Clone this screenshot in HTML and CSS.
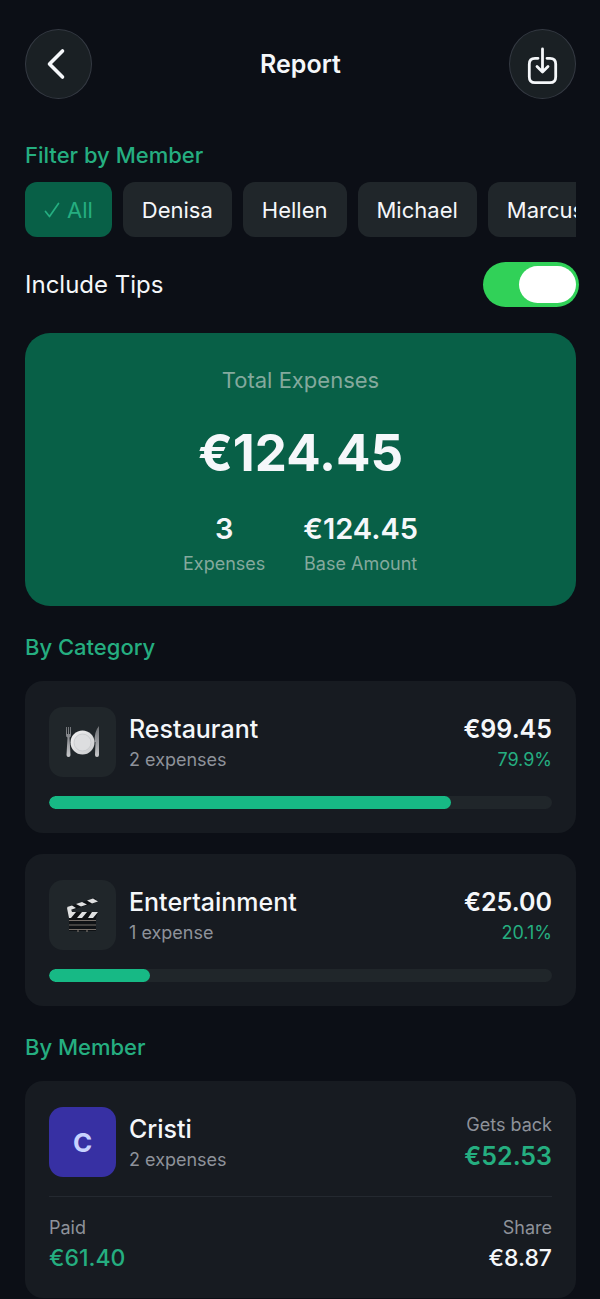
FILE: index.html
```html
<!DOCTYPE html>
<html lang="en">
<head>
<meta charset="utf-8">
<meta name="viewport" content="width=device-width, initial-scale=1">
<title>Report</title>
<link rel="stylesheet" href="styles.css">
</head>
<body>
<header class="topbar">
  <button class="round-button" type="button" aria-label="Back">
    <svg width="65" height="68" viewBox="0 0 65 68" fill="none" stroke="currentColor" stroke-width="3.6" stroke-linecap="round" stroke-linejoin="round"><path d="M36.500 21 23.500 34 36.500 47"/></svg>
  </button>
  <h1 class="title">Report</h1>
  <button class="round-button" type="button" aria-label="Export">
    <svg width="65" height="68" viewBox="0 0 65 68" fill="none" stroke="currentColor" stroke-width="2.8" stroke-linecap="round" stroke-linejoin="round"><path d="M28 28.300h-3q-5.700 0-5.700 5.700v13q0 5.700 5.700 5.700h15q5.700 0 5.700-5.700V34q0-5.700-5.700-5.700h-3M32.500 19v22.500M27 36.500l5.500 5.500 5.500-5.500"/></svg>
  </button>
</header>
<main class="content">
  <section>
    <h2 class="heading">Filter by Member</h2>
    <div class="chips">
      <button class="chip chip-active" type="button" aria-pressed="true"><svg width="16" height="18" viewBox="0 0 16 18" fill="none" stroke="currentColor" stroke-width="1.700" stroke-linecap="round" stroke-linejoin="round"><path d="M1.500 10.500 5.500 15.500 14.500 2.500"/></svg>All</button>
      <button class="chip" type="button" aria-pressed="false">Denisa</button>
      <button class="chip" type="button" aria-pressed="false">Hellen</button>
      <button class="chip" type="button" aria-pressed="false">Michael</button>
      <button class="chip" type="button" aria-pressed="false">Marcus</button>
    </div>
  </section>
  <div class="tips">
    <label class="tips-label" for="tips">Include Tips</label>
    <input class="switch" id="tips" type="checkbox" role="switch" checked>
  </div>
  <section class="summary">
    <p class="summary-label">Total Expenses</p>
    <p class="summary-total">€124.45</p>
    <div class="stats">
      <div><p class="stat-value">3</p><p class="stat-label">Expenses</p></div>
      <div><p class="stat-value">€124.45</p><p class="stat-label">Base Amount</p></div>
    </div>
  </section>
  <section>
    <h2 class="heading heading-spaced">By Category</h2>
    <div class="cards">
      <article class="card">
        <div class="row">
          <div class="tile">
            <svg width="36" height="36" viewBox="0 0 36 36">
              <defs>
                <linearGradient id="steel" x2="0" y2="1"><stop stop-color="#6d7074"/><stop offset=".5" stop-color="#96989c"/><stop offset="1" stop-color="#c9cacc"/></linearGradient>
                <linearGradient id="plate" x2="1" y2="1"><stop stop-color="#f2f2f3"/><stop offset="1" stop-color="#c9cacc"/></linearGradient>
              </defs>
              <path fill="url(#steel)" d="M1 3h1v7h1V3h1v7h1V3h1v8q0 2-1.500 2.500L5.500 31q0 2-2 2t-2-2l1-17.500Q1 13 1 11zM34 2v29q0 2-2 2t-2-2l.500-13h-1q0-11 4.500-16z"/>
              <circle cx="17.500" cy="18.500" r="12" fill="url(#plate)"/>
              <circle cx="17.500" cy="18.500" r="8.500" fill="#dddee0" stroke="#c3c5c8" stroke-width=".7"/>
            </svg>
          </div>
          <div class="names"><h3 class="name">Restaurant</h3><p class="note">2 expenses</p></div>
          <div class="figures figures-price"><p class="amount">€99.45</p><p class="note note-green">79.9%</p></div>
        </div>
        <div class="track"><div class="fill" style="width:79.9%"></div></div>
      </article>
      <article class="card">
        <div class="row">
          <div class="tile">
            <svg width="36" height="36" viewBox="0 0 36 36">
              <path fill="#0f1215" d="M2 10 30 1l2 4L4 14zM4 15h29l-2 6v13H4z"/>
              <path fill="#dfe0e1" d="m2 10 5-1.500 4 2.500-7 2.500zM11 7l6-2 5 2.500-6 2zM22 3.500l6-2 5 3-6 2zM2 11l4 1 1 3h4l-5 6H4zM17 15h5l-5 6h-5zM27 15h6l-5 6h-5z"/>
              <path stroke="#77706a" stroke-width="1.200" d="M4 23.500h27M4 28h27M4 32.500h27M13 32.500v2.500M22 32.500v2.500"/>
            </svg>
          </div>
          <div class="names"><h3 class="name">Entertainment</h3><p class="note">1 expense</p></div>
          <div class="figures figures-price"><p class="amount">€25.00</p><p class="note note-green">20.1%</p></div>
        </div>
        <div class="track"><div class="fill" style="width:20.1%"></div></div>
      </article>
    </div>
  </section>
  <section>
    <h2 class="heading heading-spaced">By Member</h2>
    <article class="card">
      <div class="row">
        <div class="tile avatar">C</div>
        <div class="names"><h3 class="name">Cristi</h3><p class="note">2 expenses</p></div>
        <div class="figures"><p class="note">Gets back</p><p class="amount amount-green">€52.53</p></div>
      </div>
      <div class="split">
        <div><p class="note">Paid</p><p class="part part-green">€61.40</p></div>
        <div class="figures"><p class="note">Share</p><p class="part">€8.87</p></div>
      </div>
    </article>
  </section>
</main>
</body>
</html>
```
FILE: styles.css
```css
* { box-sizing: border-box; }

body {
  margin: 0;
  background: #0c0f16;
  color: #f5f7fa;
  font-family: Inter, "Liberation Sans", sans-serif;
}

h1, h2, h3, p { margin: 0; }

button { font: inherit; color: inherit; }

.topbar {
  display: flex;
  align-items: center;
  justify-content: space-between;
  padding: 29px 24px 0 25px;
}

.round-button {
  width: 67px;
  height: 70px;
  padding: 0;
  display: grid;
  place-items: center;
  overflow: hidden;
  border: 1px solid #343942;
  border-radius: 50%;
  background: #1a2024;
}

.title { font-size: 25px; line-height: 32px; font-weight: 600; }

.content { padding: 42px 24px 2px 25px; }

.heading {
  color: #25ae80;
  font-size: 22px;
  line-height: 28px;
  font-weight: 500;
}

.heading-spaced { margin: 27px 0 20px; }

.chips {
  display: flex;
  gap: 11px;
  margin-top: 13px;
  overflow-x: auto;
  scrollbar-width: none;
}

.chip {
  flex: none;
  display: flex;
  align-items: center;
  gap: 7px;
  height: 55px;
  padding: 0 19px;
  border: 0;
  border-radius: 12px;
  background: #20262a;
  font-size: 22px;
  line-height: 28px;
}

.chip-active { background: #086047; color: #25ae80; }

.tips {
  display: flex;
  align-items: center;
  justify-content: space-between;
  margin: 25px -3px 26px 0;
}

.tips-label { font-size: 24px; line-height: 32px; }

.switch {
  appearance: none;
  display: flex;
  justify-content: flex-end;
  width: 96px;
  height: 45px;
  margin: 0;
  padding: 4px 3px;
  border-radius: 23px;
  background: #31d158;
}

.switch::before {
  content: "";
  width: 57px;
  border-radius: 19px;
  background: #fff;
}

.switch:not(:checked) { justify-content: flex-start; background: #39393d; }

.summary {
  padding: 31px 24px 30px;
  border-radius: 25px;
  background: #086047;
  text-align: center;
}

.summary-label { color: #84a99d; font-size: 22px; line-height: 32px; }

.summary-total {
  margin: 25px 0 26px;
  font-size: 51px;
  line-height: 64px;
  font-weight: 700;
}

.stats { display: flex; justify-content: center; gap: 38px; }

.stat-value { font-size: 29px; line-height: 36px; font-weight: 600; }

.stat-label {
  margin-top: 5px;
  color: #84a99d;
  font-size: 18px;
  line-height: 24px;
}

.cards { display: grid; gap: 21px; }

.card {
  padding: 26px 24px 24px;
  border-radius: 18px;
  background: #171b21;
}

.row { display: flex; align-items: center; gap: 13px; }

.tile {
  flex: none;
  display: grid;
  place-items: center;
  width: 67px;
  height: 70px;
  border-radius: 14px;
  background: #20262a;
}

.avatar {
  background: #3730a3;
  color: #c7d2fe;
  font-size: 26px;
  font-weight: 700;
}

.names { flex: 1; min-width: 0; padding-top: 2px; }

.figures { text-align: right; }

.figures-price { padding-top: 2px; }

.name, .amount { font-size: 25px; line-height: 34px; font-weight: 500; }

.amount { font-weight: 600; }

.amount-green, .part-green { color: #25ae80; }

.note { color: #8e929a; font-size: 18px; line-height: 28px; }

.note-green { color: #25ae80; }

.track {
  height: 13px;
  margin-top: 19px;
  overflow: hidden;
  border-radius: 7px;
  background: #20262a;
}

.fill { height: 100%; border-radius: 7px; background: #17b985; }

.split {
  display: flex;
  justify-content: space-between;
  margin-top: 19px;
  padding-top: 17px;
  border-top: 1px solid #242930;
}

.part { font-size: 23px; line-height: 32px; font-weight: 500; }
```
